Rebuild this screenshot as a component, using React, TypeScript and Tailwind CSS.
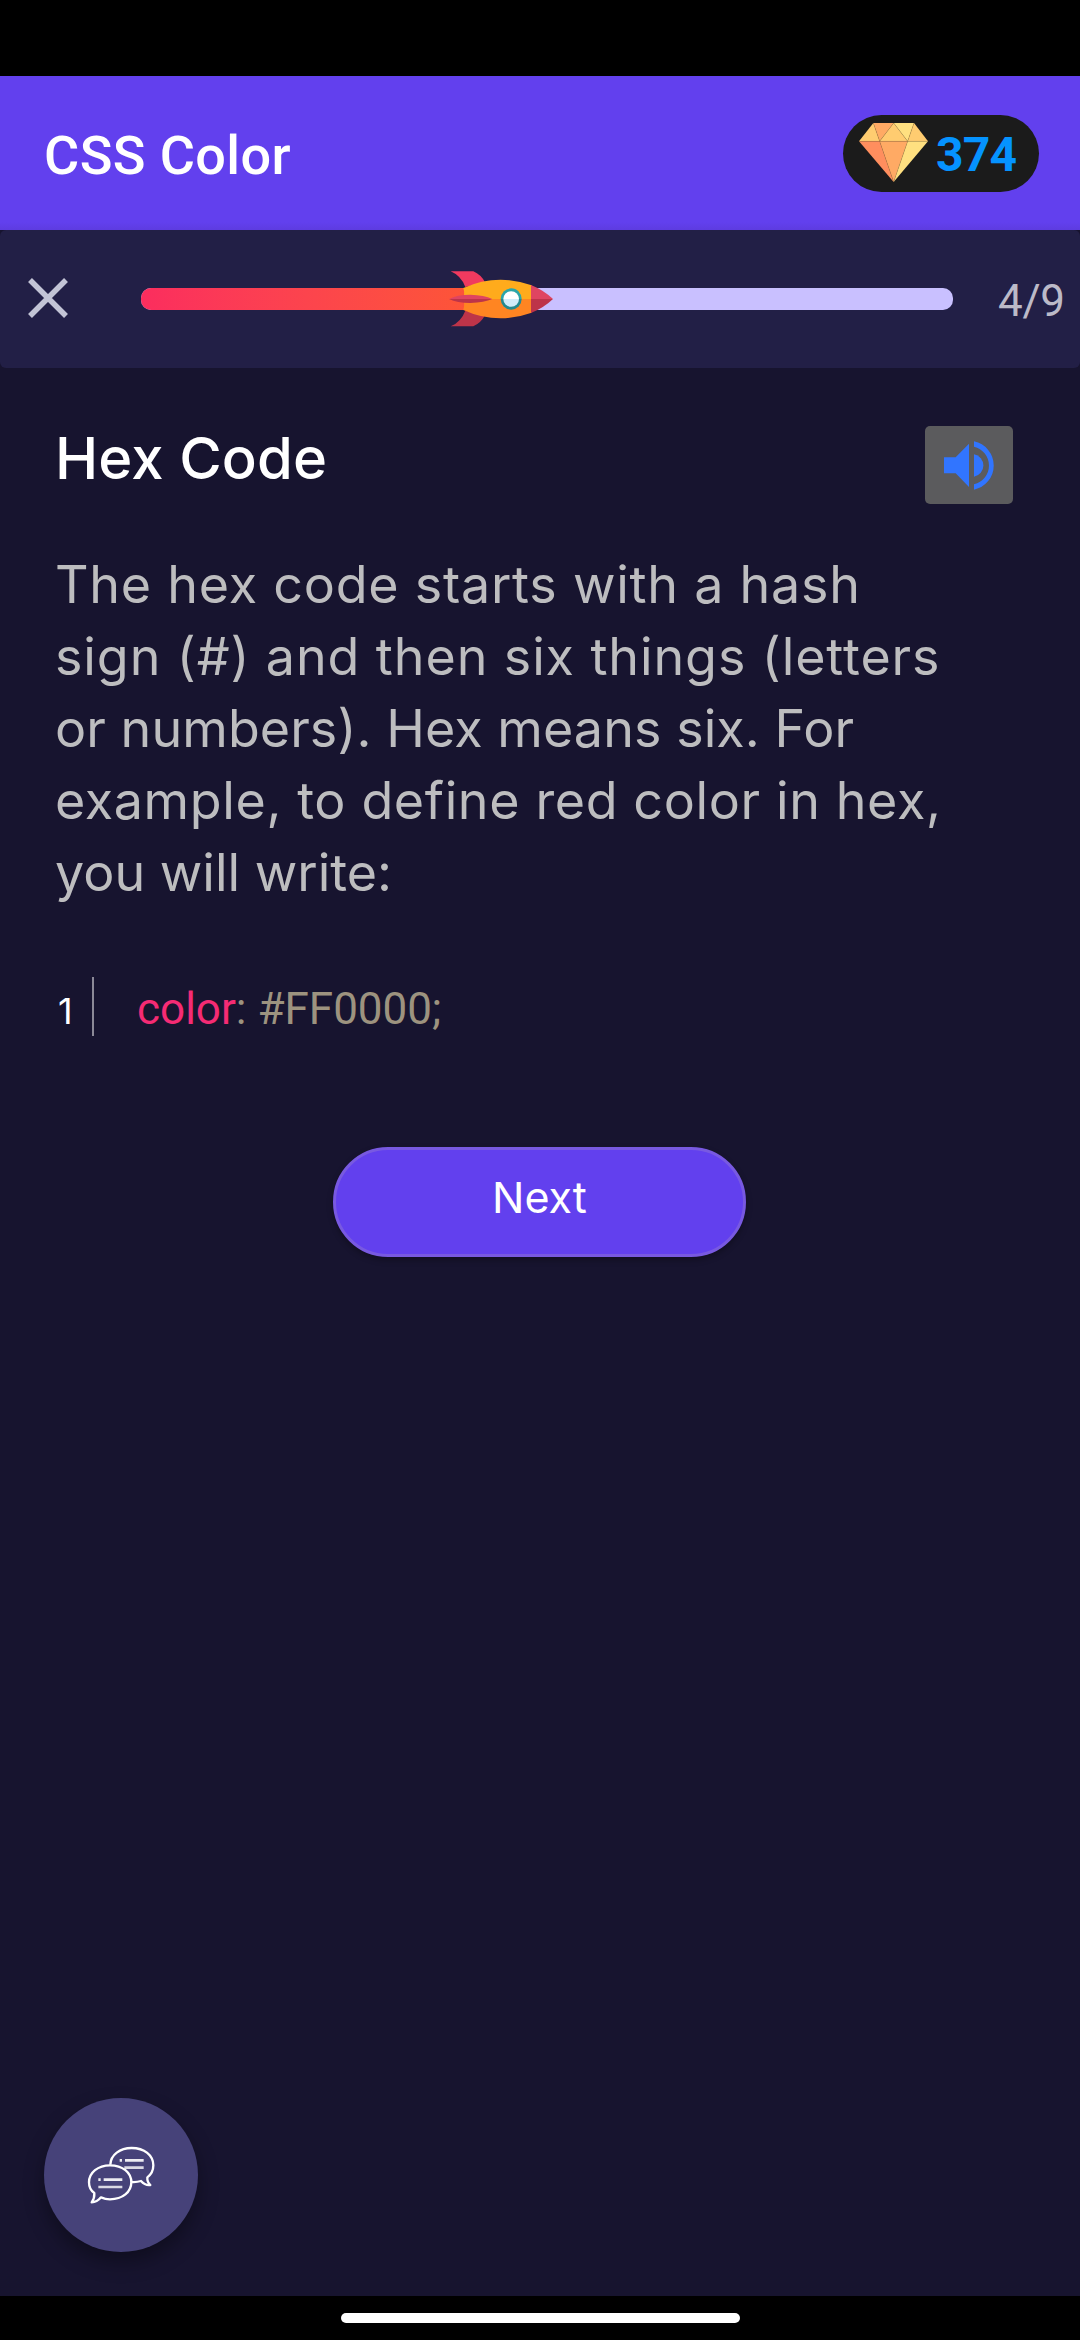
function Diamond() {
  return (
    <svg className="h-[59px] w-[69px] shrink-0" viewBox="117 98 207 177">
      <path d="M160 98L117 153H179Z" fill="#ffcc70" />
      <path d="M160 98H221L179 153Z" fill="#ffaa64" />
      <path d="M221 98L179 153H263Z" fill="#ffcc70" />
      <path d="M221 98H282L263 153Z" fill="#ffe080" />
      <path d="M282 98L324 153H263Z" fill="#ffcc70" />
      <path d="M117 153H179L221 275Z" fill="#ff8e5e" />
      <path d="M179 153H263L221 275Z" fill="#ffaa64" />
      <path d="M263 153H324L221 275Z" fill="#ffe080" />
      <path
        d="M117 153H324M160 98L179 153L221 275L263 153L282 98M179 153L221 98L263 153"
        fill="none"
        stroke="#8a6a35"
        strokeOpacity="0.45"
        strokeWidth="1.5"
      />
    </svg>
  );
}

function Rocket() {
  return (
    <svg className="absolute top-[-17px] left-[308px] h-[56px] w-[104px]" viewBox="88 92 312 168">
      <path d="M93 93H161Q184 103 196 126L137 140Q124 106 93 93Z" fill="#f03a5f" />
      <path d="M93 258H161Q184 248 196 225L137 211Q124 245 93 258Z" fill="#bd3449" />
      <path d="M131 143Q185 118 243 118Q292 119 336 135V176H131Q136 159 131 143Z" fill="#ffab1c" />
      <path d="M131 209Q185 234 243 234Q292 233 336 217V176H131Q136 193 131 209Z" fill="#ff8522" />
      <path d="M334 134Q373 150 400 176H334Z" fill="#df4561" />
      <path d="M334 218Q373 202 400 176H334Z" fill="#bd3449" />
      <path d="M88 176Q112 163 152 163Q194 164 218 176Z" fill="#df4561" />
      <path d="M88 176Q112 188 152 188Q194 187 218 176Z" fill="#bd3449" />
      <path d="M243 176A31.5 32 0 0 1 306 176Z" fill="#2aa5a9" />
      <path d="M243 176A31.5 32 0 0 0 306 176Z" fill="#23898f" />
      <path d="M251 176A23.500 23.500 0 0 1 298 176Z" fill="#ffffff" />
      <path d="M251 176A23.500 23.500 0 0 0 298 176Z" fill="#d0ecfa" />
    </svg>
  );
}

function CloseIcon() {
  return (
    <svg className="h-[40px] w-[40px]" viewBox="0 0 40 40" fill="none" stroke="#c3c4d6" strokeWidth="5.500">
      <path d="M2 2L38 38M38 2L2 38" />
    </svg>
  );
}

function SpeakerIcon() {
  return (
    <svg className="h-[49px] w-[50px]" viewBox="132 122 150 147" fill="#3175ff">
      <path d="M132 171H167L207 130V260L167 219H132Z" />
      <path d="M222 162A34 34 0 0 1 222 229Z" />
      <path d="M222 123A74 74 0 0 1 222 268V252A58 58 0 0 0 222 139Z" />
    </svg>
  );
}

function ChatIcon() {
  return (
    <svg
      className="h-[58px] w-[68px]"
      viewBox="201 228 204 174"
      fill="none"
      stroke="#ffffff"
      strokeWidth="7"
      strokeLinejoin="round"
    >
      <path d="M271 284C272 254 300 234 335 234C373 234 400 256 400 286C400 302 393 314 382 322Q381 336 391 345Q375 347 363 333Q350 337 336 336" />
      <path d="M270 286C308 286 334 308 334 337C334 366 308 388 270 388Q256 388 243 382Q231 397 215 397Q224 385 223 369C212 362 207 351 207 337C207 308 234 286 270 286Z" />
      <g strokeWidth="8" strokeOpacity="0.9">
        <path d="M299 271H306M315 271H371" />
        <path d="M235 329H242M251 329H307" />
      </g>
      <g strokeWidth="8" strokeOpacity="0.8">
        <path d="M313 293H371M235 351H307" />
      </g>
    </svg>
  );
}

export default function App() {
  return (
    <div className="flex h-[2340px] w-[1080px] flex-col overflow-hidden bg-[#17142f] font-['Roboto',sans-serif]">
      <div className="h-[76px] shrink-0 bg-black" />

      <header className="flex h-[154px] shrink-0 items-center justify-between bg-linear-to-b from-[#6240ee] from-95% to-[#5d3ce0] pr-[41px] pl-[44px]">
        <h1 className="pt-[5px] text-[54px] leading-[64px] font-medium tracking-[0.4px] text-white">CSS Color</h1>
        <div className="flex h-[77px] w-[196px] items-center rounded-full bg-[#1b1b1b] pl-[16px]">
          <div className="pb-[1px]">
            <Diamond />
          </div>
          <span className="ml-[8px] pt-[4px] text-[48px] leading-[60px] font-bold tracking-[-0.8px] text-[#0593ff]">374</span>
        </div>
      </header>

      <div className="flex h-[138px] shrink-0 items-center rounded-[6px] bg-[#221f46]">
        <button className="ml-[28px] pb-[2px]">
          <CloseIcon />
        </button>
        <div className="relative ml-[73px] h-[22px] w-[812px] rounded-[10px] bg-[#c9c0ff]">
          <div className="h-[22px] w-[361px] rounded-l-[10px] bg-linear-to-r from-[#fb2d5e] to-[#fd5831]" />
          <Rocket />
        </div>
        <span className="ml-[45px] pt-[4px] text-[44px] leading-[56px] tracking-[-0.3px] text-[#bcbac8]">4/9</span>
      </div>

      <main className="relative flex flex-1 flex-col pr-[67px] pl-[55px] font-['Inter',sans-serif]">
        <div className="mt-[50px] flex h-[86px] items-end justify-between">
          <h2 className="self-start text-[58px] leading-[80px] font-medium tracking-[0.1px] whitespace-nowrap text-white">
            Hex Code
          </h2>
          <button className="flex h-[78px] w-[88px] items-center justify-center rounded-[5px] bg-[#5b5b5d]">
            <SpeakerIcon />
          </button>
        </div>

        <p className="mt-[45px] text-[52px] leading-[72px] whitespace-nowrap text-[#bdbdbf]">
          <span className="block tracking-[0.76px]">The hex code starts with a hash</span>
          <span className="block tracking-[0.9px]">sign (#) and then six things (letters</span>
          <span className="block tracking-[0.08px]">or numbers). Hex means six. For</span>
          <span className="block tracking-[0.62px]">example, to define red color in hex,</span>
          <span className="block">you will write:</span>
        </p>

        <div className="mt-[68px] flex h-[59px]">
          <span className="w-[37px] pt-[7px] pl-[3px] text-[36px] leading-[54px] text-white">1</span>
          <span className="w-[2px] bg-[#8b8997]" />
          <code className="ml-[43px] pt-[5px] font-['Roboto',sans-serif] text-[44px] leading-[54px] text-[#9d937f]">
            <span className="text-[#f52b74]">color</span>: #FF0000;
          </code>
        </div>

        <button className="mt-[111px] ml-[278px] flex h-[110px] w-[413px] items-center justify-center rounded-full border-[3px] border-[#7859e1] bg-[#6240ee] pb-[11px] text-[43px] leading-[60px] text-white shadow-[0_3px_6px_rgba(0,0,0,0.3)]">
          Next
        </button>

        <button className="absolute bottom-[44px] left-[44px] flex h-[154px] w-[154px] items-center justify-center rounded-full bg-[#464279] pb-[1px] shadow-[0_10px_20px_rgba(0,0,0,0.35)]">
          <ChatIcon />
        </button>
      </main>

      <div className="flex h-[44px] shrink-0 justify-center bg-black pt-[17px]">
        <div className="h-[10px] w-[399px] rounded-full bg-white" />
      </div>
    </div>
  );
}
